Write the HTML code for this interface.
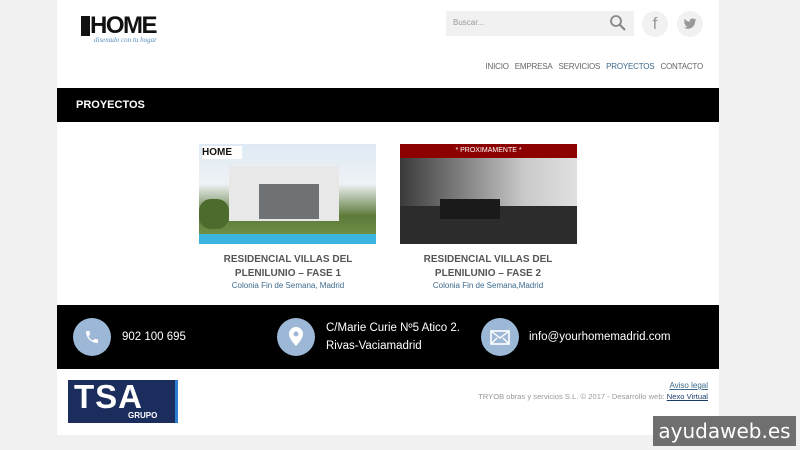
<!DOCTYPE html>
<html><head><meta charset="utf-8"><style>
*{margin:0;padding:0;box-sizing:border-box}
body{width:800px;height:450px;background:#f1f1f1;font-family:"Liberation Sans",sans-serif;position:relative;overflow:hidden}
.wrap{position:absolute;left:57px;top:0;width:662px;height:435px;background:#fff}
.abs{position:absolute}
.nav span{margin-left:6px;font-size:8px;color:#666}
.circ{position:absolute;width:38px;height:38px;border-radius:50%;background:#9db8d6;top:318px}
.ft{position:absolute;color:#fff;font-size:11.5px;line-height:18px}
.card-t{position:absolute;width:200px;text-align:center;font-size:10px;font-weight:bold;color:#555;line-height:14px}
.card-s{position:absolute;width:200px;text-align:center;font-size:8px;color:#3d6a8c}
</style></head><body>
<div class="wrap"></div>
<!-- logo -->
<div class="abs" style="left:81px;top:16px;width:9px;height:20px;background:#111"></div>
<div class="abs" style="left:90px;top:12px;font-size:24px;font-weight:bold;letter-spacing:-1.5px;color:#111">HOME</div>
<div class="abs" style="left:94px;top:36px;font-size:7px;font-style:italic;color:#5a8fc0;font-family:'Liberation Serif',serif">disenado con tu hogar</div>
<!-- search -->
<div class="abs" style="left:446px;top:11px;width:188px;height:25px;background:#f1f1f1"></div>
<div class="abs" style="left:453px;top:18px;font-size:8px;color:#999">Buscar...</div>
<svg class="abs" style="left:609px;top:14px" width="18" height="18" viewBox="0 0 18 18"><circle cx="7" cy="7" r="5" fill="none" stroke="#888" stroke-width="1.8"/><path d="M11 11l5 5" stroke="#888" stroke-width="2.2"/></svg>
<div class="abs" style="left:642px;top:11px;width:26px;height:26px;border-radius:50%;background:#f1f1f1;text-align:center;font-size:17px;line-height:26px;color:#999">f</div>
<div class="abs" style="left:677px;top:11px;width:26px;height:26px;border-radius:50%;background:#f1f1f1"></div>
<svg class="abs" style="left:683px;top:17px" width="14" height="14" viewBox="0 0 24 24"><path fill="#999" d="M23 4.6a9 9 0 0 1-2.6.7 4.5 4.5 0 0 0 2-2.5 9 9 0 0 1-2.9 1.1A4.5 4.5 0 0 0 11.8 8 12.8 12.8 0 0 1 2.5 3.3a4.5 4.5 0 0 0 1.4 6 4.5 4.5 0 0 1-2-.6 4.5 4.5 0 0 0 3.6 4.5 4.5 4.5 0 0 1-2 .1 4.5 4.5 0 0 0 4.2 3.1A9 9 0 0 1 1 18.3 12.8 12.8 0 0 0 8 20.3c8.3 0 12.8-6.9 12.8-12.8v-.6A9 9 0 0 0 23 4.6z"/></svg>
<div class="abs nav" style="right:97px;top:56px;white-space:nowrap;letter-spacing:-0.2px"><span>INICIO</span><span>EMPRESA</span><span>SERVICIOS</span><span style="color:#3d6a8c">PROYECTOS</span><span>CONTACTO</span></div>
<!-- title bar -->
<div class="abs" style="left:57px;top:88px;width:662px;height:34px;background:#000"></div>
<div class="abs" style="left:76px;top:99px;color:#fff;font-size:11px;font-weight:bold">PROYECTOS</div>
<!-- card 1 -->
<div class="abs" style="left:199px;top:144px;width:177px;height:100px;background:linear-gradient(#dfeaf4 0,#eef2f5 40%,#5d7a3a 72%,#6e8e45 90%,#3bb5e0 90%);overflow:hidden">
 <div class="abs" style="left:30px;top:22px;width:110px;height:55px;background:#e8e8e8"></div>
 <div class="abs" style="left:60px;top:40px;width:60px;height:35px;background:#6f7275"></div>
 <div class="abs" style="left:0;top:55px;width:30px;height:30px;background:#4e6b2e;border-radius:40%"></div>
 <div class="abs" style="left:3px;top:2px;width:40px;height:13px;background:#fff;font-size:10px;font-weight:bold;color:#111;line-height:13px">HOME</div>
</div>
<div class="card-t" style="left:188px;top:253px">RESIDENCIAL VILLAS DEL<br>PLENILUNIO – FASE 1</div>
<div class="card-s" style="left:188px;top:281px">Colonia Fin de Semana, Madrid</div>
<!-- card 2 -->
<div class="abs" style="left:400px;top:144px;width:177px;height:100px;background:linear-gradient(90deg,#3a3a3a,#8a8a8a 40%,#c9c9c9 70%,#e0e0e0);overflow:hidden">
 <div class="abs" style="left:0;top:0;width:177px;height:14px;background:#8b0000;color:#fff;font-size:7px;text-align:center;line-height:14px">* PROXIMAMENTE *</div>
 <div class="abs" style="left:0;top:62px;width:177px;height:38px;background:#2c2c2c"></div>
 <div class="abs" style="left:40px;top:55px;width:60px;height:20px;background:#1a1a1a"></div>
</div>
<div class="card-t" style="left:388px;top:253px">RESIDENCIAL VILLAS DEL<br>PLENILUNIO – FASE 2</div>
<div class="card-s" style="left:388px;top:281px">Colonia Fin de Semana,Madrid</div>
<!-- footer contact -->
<div class="abs" style="left:57px;top:305px;width:662px;height:64px;background:#000"></div>
<div class="circ" style="left:73px"></div>
<svg class="abs" style="left:84px;top:329px" width="16" height="16" viewBox="0 0 24 24"><path fill="#fff" d="M6.6 10.8a15 15 0 0 0 6.6 6.6l2.2-2.2c.3-.3.7-.4 1-.2 1.1.4 2.3.6 3.6.6.6 0 1 .4 1 1V20c0 .6-.4 1-1 1A17 17 0 0 1 3 4c0-.6.4-1 1-1h3.5c.6 0 1 .4 1 1 0 1.3.2 2.5.6 3.6.1.3 0 .7-.2 1z"/></svg>
<div class="ft" style="left:122px;top:328px">902 100 695</div>
<div class="circ" style="left:277px"></div>
<svg class="abs" style="left:289px;top:327px" width="14" height="19" viewBox="0 0 14 19"><path fill="#fff" d="M7 0a7 7 0 0 0-7 7c0 5 7 12 7 12s7-7 7-12a7 7 0 0 0-7-7zm0 9.5A2.5 2.5 0 1 1 7 4.5a2.5 2.5 0 0 1 0 5z"/></svg>
<div class="ft" style="left:326px;top:319px">C/Marie Curie Nº5 Atico 2.<br>Rivas-Vaciamadrid</div>
<div class="circ" style="left:481px"></div>
<svg class="abs" style="left:490px;top:330px" width="20" height="15" viewBox="0 0 20 15"><rect x="1" y="1" width="18" height="13" fill="none" stroke="#fff" stroke-width="1.6"/><path d="M1 1l9 7 9-7M1 14l6-6M19 14l-6-6" fill="none" stroke="#fff" stroke-width="1.4"/></svg>
<div class="ft" style="left:529px;top:328px">info@yourhomemadrid.com</div>
<!-- TSA logo -->
<div class="abs" style="left:68px;top:380px;width:107px;height:43px;background:#1b2d5c"></div>
<div class="abs" style="left:175px;top:380px;width:3px;height:43px;background:#2a7fd0"></div>
<div class="abs" style="left:74px;top:378px;color:#fff;font-size:33px;font-weight:bold;letter-spacing:1px">TSA</div>
<div class="abs" style="left:128px;top:411px;color:#fff;font-size:8px;font-weight:bold">GRUPO</div>
<div class="abs" style="right:92px;top:381px;font-size:8px;color:#3d6a8c;text-decoration:underline">Aviso legal</div>
<div class="abs" style="right:92px;top:392px;font-size:7.6px;color:#999;white-space:nowrap">TRYOB obras y servicios S.L. © 2017 - Desarrollo web: <span style="color:#1b3d6e;text-decoration:underline">Nexo Virtual</span></div>
<!-- watermark -->
<div class="abs" style="left:653px;top:416px;width:143px;height:30px;background:#6f6f6f;color:#fff;font-size:20px;text-align:center;line-height:30px;font-family:'DejaVu Sans',sans-serif">ayudaweb.es</div>
</body></html>
